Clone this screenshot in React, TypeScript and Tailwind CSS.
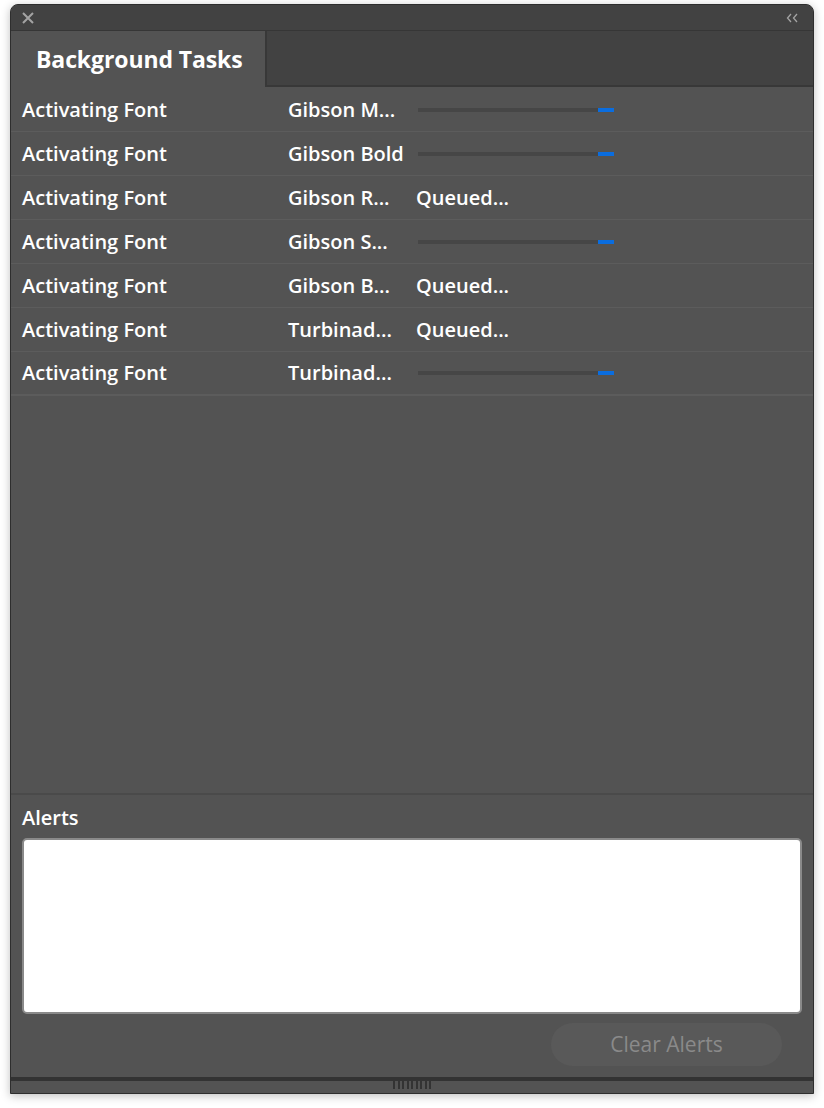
import React from "react"

type Task = {
  name: string
  font: string
  status: "progress" | "queued"
}

const tasks: Task[] = [
  { name: "Activating Font", font: "Gibson M...", status: "progress" },
  { name: "Activating Font", font: "Gibson Bold", status: "progress" },
  { name: "Activating Font", font: "Gibson R...", status: "queued" },
  { name: "Activating Font", font: "Gibson S...", status: "progress" },
  { name: "Activating Font", font: "Gibson B...", status: "queued" },
  { name: "Activating Font", font: "Turbinad...", status: "queued" },
  { name: "Activating Font", font: "Turbinad...", status: "progress" },
]

const font = { fontFamily: '"Open Sans", "Noto Sans", sans-serif' }

function TaskRow({ task, last }: { task: Task; last: boolean }) {
  return (
    <div
      className={
        "flex h-[44px] items-center text-[20px] font-semibold text-white " +
        (last ? "border-b-2 border-[#5c5c5c]" : "border-b border-[#5c5c5c]")
      }
    >
      <div className="w-[277px] shrink-0 pl-[11px]">{task.name}</div>
      <div className="w-[128px] shrink-0">{task.font}</div>
      {task.status === "queued" ? (
        <div>Queued...</div>
      ) : (
        <div className="ml-[2px] flex h-[4px] w-[196px]">
          <div className="h-full w-[180px] bg-[#464646]" />
          <div className="h-full w-[16px] bg-[#0a6ddf]" />
        </div>
      )}
    </div>
  )
}

export default function App() {
  return (
    <div className="h-[1108px] bg-white pl-[10px] pt-[4px]" style={font}>
      <div className="flex h-[1090px] w-[804px] flex-col overflow-hidden rounded-t-[8px] border border-[#2e2e2e] bg-[#535353] shadow-[0_2px_10px_rgba(0,0,0,0.25)]">
        {/* title bar */}
        <div className="flex h-[26px] shrink-0 items-center justify-between border-b border-[#363636] bg-[#424242] pl-[10px] pr-[14px]">
          <svg width="14" height="14" viewBox="0 0 14 14">
            <path d="M2 2 L12 12 M12 2 L2 12" stroke="#a3a3a3" strokeWidth="2" />
          </svg>
          <svg width="13" height="10" viewBox="0 0 13 10">
            <path d="M5 1 L1.5 5 L5 9 M11 1 L7.5 5 L11 9" fill="none" stroke="#a3a3a3" strokeWidth="1.3" />
          </svg>
        </div>

        {/* tabs */}
        <div className="flex h-[56px] shrink-0 bg-[#424242]">
          <div className="flex w-[256px] items-center border-r-2 border-[#383838] bg-[#535353] pl-[25px] text-[23px] font-bold tracking-[-0.1px] text-white">
            Background Tasks
          </div>
          <div className="flex-1 border-b-2 border-[#383838]" />
        </div>

        {/* task list */}
        <div className="flex flex-col pt-[1px]">
          {tasks.map((t, i) => (
            <TaskRow key={i} task={t} last={i === tasks.length - 1} />
          ))}
        </div>

        <div className="flex-1" />

        {/* alerts */}
        <div className="flex shrink-0 flex-col border-t-2 border-[#4a4a4a] px-[11px] pt-[11px]">
          <div className="text-[20px] font-semibold leading-[24px] text-white">Alerts</div>
          <div className="mt-[8px] h-[176px] rounded-[5px] border-2 border-[#8a8a8a] bg-white" />
          <div className="mt-[9px] flex justify-end pr-[20px]">
            <button className="h-[43px] w-[231px] rounded-full bg-[#595959] text-[21px] text-[#8a8a8a]">
              Clear Alerts
            </button>
          </div>
        </div>

        {/* resize grip */}
        <div className="mt-[11px] h-[4px] shrink-0 bg-[#333333]" />
        <div className="flex h-[12px] shrink-0 justify-center">
          <div className="flex h-[8px] gap-[2.5px]">
            {Array.from({ length: 9 }).map((_, i) => (
              <div key={i} className="h-full w-[2px] bg-[#333333]" />
            ))}
          </div>
        </div>
      </div>
    </div>
  )
}
